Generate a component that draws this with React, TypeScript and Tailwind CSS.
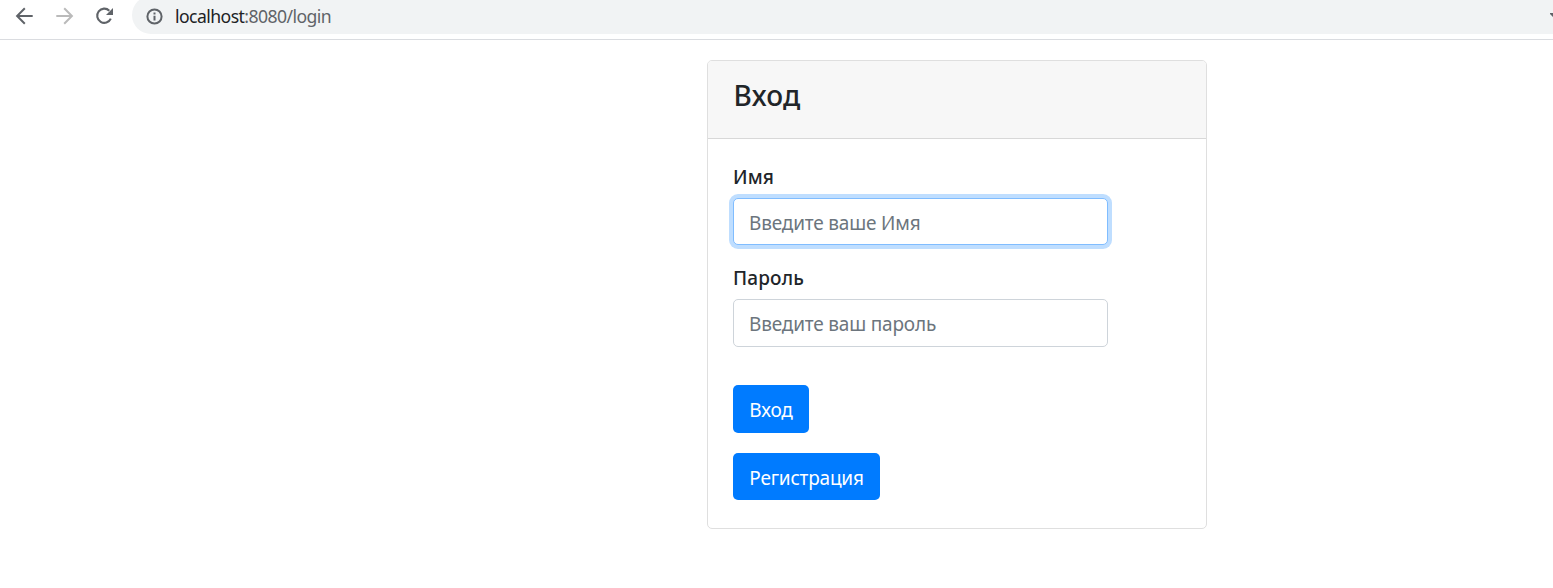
import React from 'react';

function BrowserBar() {
  return (
    <header className="flex h-10 shrink-0 items-start overflow-hidden border-b border-[#dadce0] bg-white">
      <nav className="flex h-8 w-[132px] shrink-0 items-center text-[#5f6368]">
        <button aria-label="Back" className="ml-3 h-6 w-6">
          <svg viewBox="0 0 24 24" className="h-6 w-6" fill="none" stroke="currentColor" strokeWidth="2">
            <path d="M20.7 12H5.5M12.8 4.3L5.1 12l7.7 7.7" />
          </svg>
        </button>
        <button aria-label="Forward" className="ml-4 h-6 w-6 text-[#bababa]">
          <svg viewBox="0 0 24 24" className="h-6 w-6" fill="none" stroke="currentColor" strokeWidth="2">
            <path d="M4.3 12h15.2M12.2 4.3l7.7 7.7-7.7 7.7" />
          </svg>
        </button>
        <button aria-label="Reload" className="ml-4 h-6 w-6">
          <svg viewBox="0 0 24 24" className="h-6 w-6">
            <path d="M17.3 6.7A7.1 7.1 0 1 0 18.8 14.6" fill="none" stroke="currentColor" strokeWidth="2.1" />
            <path d="M21 4v7h-7z" fill="currentColor" />
          </svg>
        </button>
      </nav>
      <div className="-mt-1 flex h-[38px] grow items-center rounded-l-full bg-[#f1f3f4] pl-3.5">
        <svg viewBox="0 0 18 18" className="mt-[3px] h-[18px] w-[18px] shrink-0" fill="none" stroke="#5f6368" strokeWidth="2">
          <circle cx="8.5" cy="8.5" r="7.1" />
          <path d="M8.5 7.7v4.8M8.5 4.5v1.9" />
        </svg>
        <span className="mt-0.5 ml-[11px] text-[17.6px] leading-6 tracking-[-0.56px] whitespace-nowrap text-[#5f6368]">
          <span className="text-[#202124]">localhost</span>:8080/login
        </span>
        <svg viewBox="0 0 3 6" className="mt-[-2px] ml-auto h-1.5 w-[3px]" fill="#5f6368">
          <path d="M0 2h3v4L0 3z" />
        </svg>
      </div>
    </header>
  );
}

type FieldProps = { id: string; label: string; placeholder: string; type: string; className: string };

function Field({ id, label, placeholder, type, className }: FieldProps) {
  return (
    <div className="flex flex-col">
      <label htmlFor={id} className="mb-[7px] text-[19px] leading-[27px] font-medium tracking-[0.15px] text-[#212529]">
        {label}
      </label>
      <input
        id={id}
        type={type}
        placeholder={placeholder}
        className={`w-[375px] rounded-[5px] border bg-white pr-4 pl-[15px] pt-0.5 text-[19px] tracking-[-0.18px] text-[#495057] outline-none placeholder:text-[#6c757d] ${className}`}
      />
    </div>
  );
}

export default function App() {
  return (
    <div className="flex h-[588px] flex-col overflow-hidden bg-white font-['Noto_Sans',sans-serif]">
      <BrowserBar />
      <main className="mt-5 ml-[707px] flex h-[469px] w-[500px] flex-col rounded-[5px] border border-[#dfdfdf]">
        <div className="h-[78px] shrink-0 rounded-t-[4px] border-b border-[#d8d8d8] bg-[#f7f7f7] pt-4 pl-[25.5px]">
          <h1 className="text-[28px] leading-9 font-medium tracking-[0.2px] text-[#212529]">Вход</h1>
        </div>
        <form className="flex flex-col items-start pt-[25px] pl-[25px]">
          <Field
            id="name"
            label="Имя"
            placeholder="Введите ваше Имя"
            type="text"
            className="h-[47px] border-[#80bdff] shadow-[0_0_0_4px_#bfdeff]"
          />
          <div className="mt-5">
            <Field
              id="password"
              label="Пароль"
              placeholder="Введите ваш пароль"
              type="password"
              className="h-12 border-[#ced4da]"
            />
          </div>
          <button type="button" className="mt-[38px] h-12 w-[76px] rounded-[5px] bg-[#007bff] pt-0.5 text-[19px] tracking-[-0.15px] text-white">
            Вход
          </button>
          <button type="button" className="mt-5 h-[47px] w-[147px] rounded-[5px] bg-[#007bff] pt-[3px] text-[19px] tracking-[-0.2px] text-white">
            Регистрация
          </button>
        </form>
      </main>
    </div>
  );
}
